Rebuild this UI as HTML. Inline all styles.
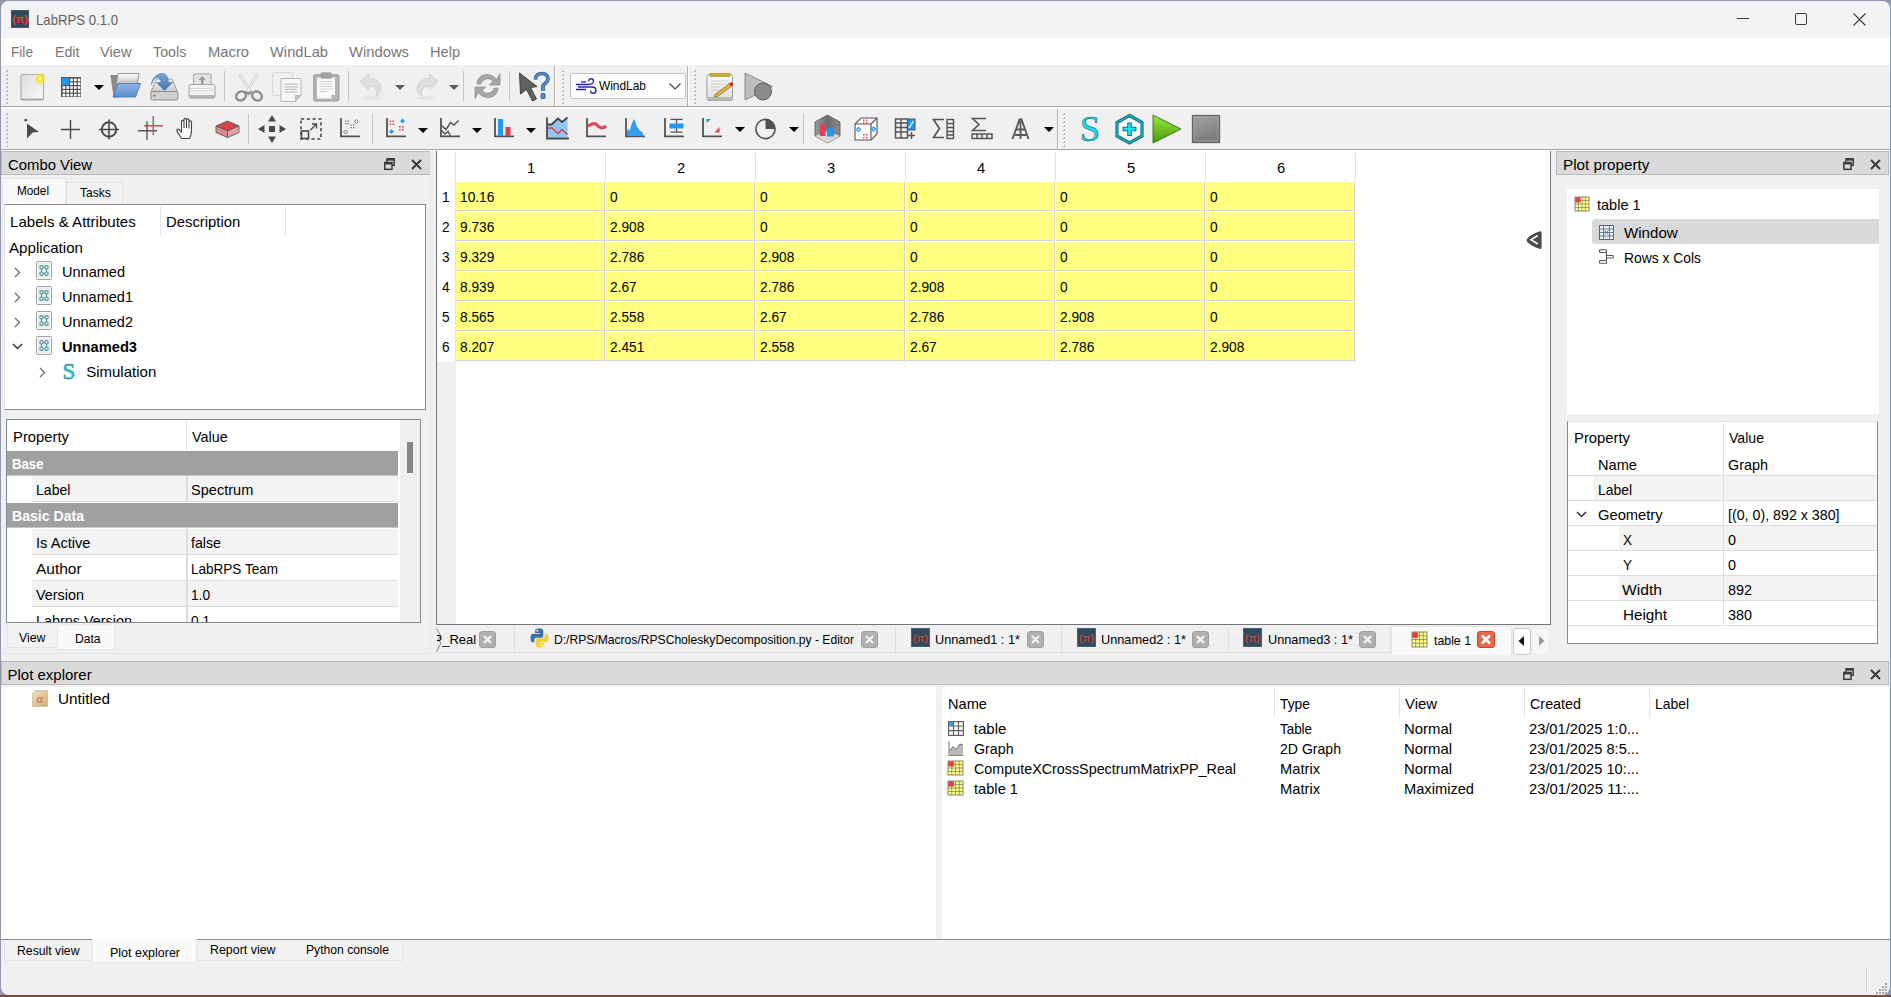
<!DOCTYPE html>
<html><head><meta charset="utf-8"><title>LabRPS</title>
<style>
*{box-sizing:border-box;margin:0;padding:0}
html,body{width:1891px;height:997px;overflow:hidden;position:relative;background:#9298ac;font-family:"Liberation Sans",sans-serif;color:#000}
.a{position:absolute}
.t{position:absolute;white-space:nowrap;transform-origin:0 0}
svg{overflow:visible}
</style></head><body>
<div class="a" style="left:0;top:995px;width:1891px;height:2px;background:#7a4c44"></div>
<div class="a" style="left:1px;top:1px;width:1889px;height:994px;background:#f0f0f0;border-radius:8px;overflow:hidden"></div>
<div class="a" style="left:1px;top:1px;width:1889px;height:37px;background:#f3f3f3;border-radius:8px 8px 0 0"></div>
<svg class="a" style="left:11px;top:10px" width="18" height="18" viewBox="0 0 18 18"><rect x="0" y="0" width="18" height="18" fill="#2e4a5f"/><rect x="0.5" y="0.5" width="17" height="17" fill="none" stroke="#3d5b70" stroke-width="1"/><text x="9" y="13" text-anchor="middle" font-family="Liberation Sans" font-weight="bold" font-size="11" fill="#e8442a">(π)</text></svg>
<div class="t" style="left:35.80px;top:12.30px;font-size:15.00px;line-height:15.00px;color:#5f5f5f;transform:scaleX(0.8780);">LabRPS 0.1.0</div>
<div class="a" style="left:1737px;top:18px;width:12px;height:1px;background:#3a3a3a"></div>
<svg class="a" style="left:1795px;top:13px" width="12" height="12" viewBox="0 0 12 12"><rect x="0.5" y="0.5" width="11" height="11" rx="1.5" fill="none" stroke="#3a3a3a" stroke-width="1"/></svg>
<svg class="a" style="left:1853px;top:13px" width="13" height="13" viewBox="0 0 13 13"><path d="M0.5 0.5L12.5 12.5M12.5 0.5L0.5 12.5" stroke="#3a3a3a" stroke-width="1.1"/></svg>
<div class="a" style="left:1px;top:38px;width:1889px;height:27px;background:#fff"></div>
<div class="t" style="left:11.40px;top:44.30px;font-size:15.00px;line-height:15.00px;color:#787878;transform:scaleX(0.9102);">File</div>
<div class="t" style="left:54.60px;top:44.30px;font-size:15.00px;line-height:15.00px;color:#787878;transform:scaleX(0.9440);">Edit</div>
<div class="t" style="left:100.30px;top:44.30px;font-size:15.00px;line-height:15.00px;color:#787878;transform:scaleX(0.9832);">View</div>
<div class="t" style="left:153.00px;top:44.30px;font-size:15.00px;line-height:15.00px;color:#787878;transform:scaleX(0.9510);">Tools</div>
<div class="t" style="left:208.30px;top:44.30px;font-size:15.00px;line-height:15.00px;color:#787878;transform:scaleX(0.9838);">Macro</div>
<div class="t" style="left:270.00px;top:44.30px;font-size:15.00px;line-height:15.00px;color:#787878;transform:scaleX(0.9797);">WindLab</div>
<div class="t" style="left:349.30px;top:44.30px;font-size:15.00px;line-height:15.00px;color:#787878;transform:scaleX(0.9860);">Windows</div>
<div class="t" style="left:430.30px;top:44.30px;font-size:15.00px;line-height:15.00px;color:#787878;transform:scaleX(0.9725);">Help</div>
<div class="a" style="left:1px;top:106px;width:1889px;height:1px;background:#a6a6a6"></div>
<div class="a" style="left:1px;top:107px;width:1889px;height:2px;background:#fdfdfd"></div>
<div class="a" style="left:1px;top:149px;width:1889px;height:1px;background:#a6a6a6"></div>
<div class="a" style="left:1px;top:150px;width:1889px;height:1px;background:#fafafa"></div>
<div class="a" style="left:554px;top:66px;width:1px;height:40px;background:#b0b0b0"></div>
<div class="a" style="left:555px;top:66px;width:1px;height:40px;background:#fff"></div>
<div class="a" style="left:687px;top:66px;width:1px;height:40px;background:#b0b0b0"></div>
<div class="a" style="left:688px;top:66px;width:1px;height:40px;background:#fff"></div>
<div class="a" style="left:1057px;top:109px;width:1px;height:40px;background:#b0b0b0"></div>
<div class="a" style="left:1058px;top:109px;width:1px;height:40px;background:#fff"></div>
<svg class="a" style="left:6px;top:70px" width="2" height="34" viewBox="0 0 2 34"><rect x="0" y="0" width="2" height="2" fill="#b4b4b4"/><rect x="0" y="0" width="1" height="1" fill="#fff"/><rect x="0" y="4" width="2" height="2" fill="#b4b4b4"/><rect x="0" y="4" width="1" height="1" fill="#fff"/><rect x="0" y="8" width="2" height="2" fill="#b4b4b4"/><rect x="0" y="8" width="1" height="1" fill="#fff"/><rect x="0" y="12" width="2" height="2" fill="#b4b4b4"/><rect x="0" y="12" width="1" height="1" fill="#fff"/><rect x="0" y="16" width="2" height="2" fill="#b4b4b4"/><rect x="0" y="16" width="1" height="1" fill="#fff"/><rect x="0" y="20" width="2" height="2" fill="#b4b4b4"/><rect x="0" y="20" width="1" height="1" fill="#fff"/><rect x="0" y="24" width="2" height="2" fill="#b4b4b4"/><rect x="0" y="24" width="1" height="1" fill="#fff"/><rect x="0" y="28" width="2" height="2" fill="#b4b4b4"/><rect x="0" y="28" width="1" height="1" fill="#fff"/><rect x="0" y="32" width="2" height="2" fill="#b4b4b4"/><rect x="0" y="32" width="1" height="1" fill="#fff"/></svg>
<svg class="a" style="left:562px;top:70px" width="2" height="34" viewBox="0 0 2 34"><rect x="0" y="0" width="2" height="2" fill="#b4b4b4"/><rect x="0" y="0" width="1" height="1" fill="#fff"/><rect x="0" y="4" width="2" height="2" fill="#b4b4b4"/><rect x="0" y="4" width="1" height="1" fill="#fff"/><rect x="0" y="8" width="2" height="2" fill="#b4b4b4"/><rect x="0" y="8" width="1" height="1" fill="#fff"/><rect x="0" y="12" width="2" height="2" fill="#b4b4b4"/><rect x="0" y="12" width="1" height="1" fill="#fff"/><rect x="0" y="16" width="2" height="2" fill="#b4b4b4"/><rect x="0" y="16" width="1" height="1" fill="#fff"/><rect x="0" y="20" width="2" height="2" fill="#b4b4b4"/><rect x="0" y="20" width="1" height="1" fill="#fff"/><rect x="0" y="24" width="2" height="2" fill="#b4b4b4"/><rect x="0" y="24" width="1" height="1" fill="#fff"/><rect x="0" y="28" width="2" height="2" fill="#b4b4b4"/><rect x="0" y="28" width="1" height="1" fill="#fff"/><rect x="0" y="32" width="2" height="2" fill="#b4b4b4"/><rect x="0" y="32" width="1" height="1" fill="#fff"/></svg>
<svg class="a" style="left:694px;top:70px" width="2" height="34" viewBox="0 0 2 34"><rect x="0" y="0" width="2" height="2" fill="#b4b4b4"/><rect x="0" y="0" width="1" height="1" fill="#fff"/><rect x="0" y="4" width="2" height="2" fill="#b4b4b4"/><rect x="0" y="4" width="1" height="1" fill="#fff"/><rect x="0" y="8" width="2" height="2" fill="#b4b4b4"/><rect x="0" y="8" width="1" height="1" fill="#fff"/><rect x="0" y="12" width="2" height="2" fill="#b4b4b4"/><rect x="0" y="12" width="1" height="1" fill="#fff"/><rect x="0" y="16" width="2" height="2" fill="#b4b4b4"/><rect x="0" y="16" width="1" height="1" fill="#fff"/><rect x="0" y="20" width="2" height="2" fill="#b4b4b4"/><rect x="0" y="20" width="1" height="1" fill="#fff"/><rect x="0" y="24" width="2" height="2" fill="#b4b4b4"/><rect x="0" y="24" width="1" height="1" fill="#fff"/><rect x="0" y="28" width="2" height="2" fill="#b4b4b4"/><rect x="0" y="28" width="1" height="1" fill="#fff"/><rect x="0" y="32" width="2" height="2" fill="#b4b4b4"/><rect x="0" y="32" width="1" height="1" fill="#fff"/></svg>
<svg class="a" style="left:6px;top:113px" width="2" height="34" viewBox="0 0 2 34"><rect x="0" y="0" width="2" height="2" fill="#b4b4b4"/><rect x="0" y="0" width="1" height="1" fill="#fff"/><rect x="0" y="4" width="2" height="2" fill="#b4b4b4"/><rect x="0" y="4" width="1" height="1" fill="#fff"/><rect x="0" y="8" width="2" height="2" fill="#b4b4b4"/><rect x="0" y="8" width="1" height="1" fill="#fff"/><rect x="0" y="12" width="2" height="2" fill="#b4b4b4"/><rect x="0" y="12" width="1" height="1" fill="#fff"/><rect x="0" y="16" width="2" height="2" fill="#b4b4b4"/><rect x="0" y="16" width="1" height="1" fill="#fff"/><rect x="0" y="20" width="2" height="2" fill="#b4b4b4"/><rect x="0" y="20" width="1" height="1" fill="#fff"/><rect x="0" y="24" width="2" height="2" fill="#b4b4b4"/><rect x="0" y="24" width="1" height="1" fill="#fff"/><rect x="0" y="28" width="2" height="2" fill="#b4b4b4"/><rect x="0" y="28" width="1" height="1" fill="#fff"/><rect x="0" y="32" width="2" height="2" fill="#b4b4b4"/><rect x="0" y="32" width="1" height="1" fill="#fff"/></svg>
<svg class="a" style="left:1063px;top:113px" width="2" height="34" viewBox="0 0 2 34"><rect x="0" y="0" width="2" height="2" fill="#b4b4b4"/><rect x="0" y="0" width="1" height="1" fill="#fff"/><rect x="0" y="4" width="2" height="2" fill="#b4b4b4"/><rect x="0" y="4" width="1" height="1" fill="#fff"/><rect x="0" y="8" width="2" height="2" fill="#b4b4b4"/><rect x="0" y="8" width="1" height="1" fill="#fff"/><rect x="0" y="12" width="2" height="2" fill="#b4b4b4"/><rect x="0" y="12" width="1" height="1" fill="#fff"/><rect x="0" y="16" width="2" height="2" fill="#b4b4b4"/><rect x="0" y="16" width="1" height="1" fill="#fff"/><rect x="0" y="20" width="2" height="2" fill="#b4b4b4"/><rect x="0" y="20" width="1" height="1" fill="#fff"/><rect x="0" y="24" width="2" height="2" fill="#b4b4b4"/><rect x="0" y="24" width="1" height="1" fill="#fff"/><rect x="0" y="28" width="2" height="2" fill="#b4b4b4"/><rect x="0" y="28" width="1" height="1" fill="#fff"/><rect x="0" y="32" width="2" height="2" fill="#b4b4b4"/><rect x="0" y="32" width="1" height="1" fill="#fff"/></svg>
<div class="a" style="left:224px;top:71px;width:1px;height:30px;background:#c6c6c6"></div>
<div class="a" style="left:348px;top:71px;width:1px;height:30px;background:#c6c6c6"></div>
<div class="a" style="left:463px;top:71px;width:1px;height:30px;background:#c6c6c6"></div>
<div class="a" style="left:509px;top:71px;width:1px;height:30px;background:#c6c6c6"></div>
<div class="a" style="left:248px;top:114px;width:1px;height:30px;background:#c6c6c6"></div>
<div class="a" style="left:372px;top:114px;width:1px;height:30px;background:#c6c6c6"></div>
<div class="a" style="left:803px;top:114px;width:1px;height:30px;background:#c6c6c6"></div>
<svg class="a" style="left:20px;top:73px" width="27" height="28" viewBox="0 0 27 28"><defs><linearGradient id="nd" x1="0" y1="0" x2="1" y2="1"><stop offset="0" stop-color="#dcdcdc"/><stop offset="1" stop-color="#fafafa"/></linearGradient><radialGradient id="glow"><stop offset="0" stop-color="#fffff0"/><stop offset="0.35" stop-color="#f5ea20"/><stop offset="1" stop-color="#f5ea20" stop-opacity="0"/></radialGradient></defs><rect x="1" y="1.5" width="22.5" height="25.5" rx="1.5" fill="url(#nd)" stroke="#adadad" stroke-width="1.2"/><rect x="1" y="25.5" width="22.5" height="1.6" fill="#a8a8a8"/><circle cx="20" cy="6" r="6.5" fill="url(#glow)"/></svg>
<svg class="a" style="left:61px;top:77px" width="20" height="20" viewBox="0 0 20 20"><rect x="0" y="0" width="20" height="20" fill="#555"/><rect x="9.2" y="1.6" width="2.6" height="2.6" fill="#fff"/><rect x="13.0" y="1.6" width="2.6" height="2.6" fill="#fff"/><rect x="16.8" y="1.6" width="2.6" height="2.6" fill="#fff"/><rect x="9.2" y="5.4" width="2.6" height="2.6" fill="#fff"/><rect x="13.0" y="5.4" width="2.6" height="2.6" fill="#fff"/><rect x="16.8" y="5.4" width="2.6" height="2.6" fill="#fff"/><rect x="1.6" y="9.2" width="2.6" height="2.6" fill="#fff"/><rect x="5.4" y="9.2" width="2.6" height="2.6" fill="#fff"/><rect x="9.2" y="9.2" width="2.6" height="2.6" fill="#fff"/><rect x="13.0" y="9.2" width="2.6" height="2.6" fill="#fff"/><rect x="16.8" y="9.2" width="2.6" height="2.6" fill="#fff"/><rect x="1.6" y="13.0" width="2.6" height="2.6" fill="#fff"/><rect x="5.4" y="13.0" width="2.6" height="2.6" fill="#fff"/><rect x="9.2" y="13.0" width="2.6" height="2.6" fill="#fff"/><rect x="13.0" y="13.0" width="2.6" height="2.6" fill="#fff"/><rect x="16.8" y="13.0" width="2.6" height="2.6" fill="#fff"/><rect x="1.6" y="16.8" width="2.6" height="2.6" fill="#fff"/><rect x="5.4" y="16.8" width="2.6" height="2.6" fill="#fff"/><rect x="9.2" y="16.8" width="2.6" height="2.6" fill="#fff"/><rect x="13.0" y="16.8" width="2.6" height="2.6" fill="#fff"/><rect x="16.8" y="16.8" width="2.6" height="2.6" fill="#fff"/><rect x="1" y="1" width="7" height="7" fill="#2196f3"/></svg>
<svg class="a" style="left:94px;top:85px" width="10" height="5" viewBox="0 0 10 5"><path d="M0 0H10L5 5Z" fill="#000"/></svg>
<svg class="a" style="left:110px;top:72px" width="31" height="27" viewBox="0 0 31 27"><defs><linearGradient id="of" x1="0" y1="0" x2="0" y2="1"><stop offset="0" stop-color="#8fb4e0"/><stop offset="1" stop-color="#5a8fd0"/></linearGradient><linearGradient id="pp" x1="0" y1="0" x2="0" y2="1"><stop offset="0" stop-color="#fff"/><stop offset="1" stop-color="#b8b8b8"/></linearGradient></defs><path d="M1 3.5H8V25H4Z" fill="#8a8a8a" stroke="#777" stroke-width="0.8"/><path d="M8 1.5H29L27 13H6Z" fill="url(#pp)" stroke="#8c8c8c" stroke-width="0.9"/><path d="M8 11.5H30.5L25.5 25H3Z" fill="url(#of)" stroke="#4a7cc0" stroke-width="0.9"/></svg>
<svg class="a" style="left:150px;top:72px" width="29" height="29" viewBox="0 0 29 29"><defs><linearGradient id="dr" x1="0" y1="0" x2="0" y2="1"><stop offset="0" stop-color="#f4f4f4"/><stop offset="1" stop-color="#c8c8c8"/></linearGradient></defs><path d="M6.5 7H22L27.5 20H1Z" fill="url(#dr)" stroke="#9a9a9a" stroke-width="1"/><rect x="0.8" y="19.5" width="27" height="8.5" rx="1.5" fill="#d0d0d0" stroke="#8e8e8e" stroke-width="1"/><rect x="3" y="23" width="3" height="1.5" fill="#888"/><defs><linearGradient id="sa" x1="0" y1="0" x2="0" y2="1"><stop offset="0" stop-color="#7aa4d8"/><stop offset="1" stop-color="#3f72b8"/></linearGradient></defs><path d="M1.5 12.5C2 6 7 1.5 12 1.5C15.5 1.5 18 4 18.5 10.5H22.5L14.5 18.5L6.5 10.5H11C11 7.5 9.5 5.5 7 5.5C4.5 5.5 2.5 8.5 1.5 12.5Z" fill="url(#sa)" stroke="#3a6aa8" stroke-width="0.5"/></svg>
<svg class="a" style="left:188px;top:73px" width="29" height="28" viewBox="0 0 29 28"><rect x="5.5" y="1" width="17.5" height="13" rx="1" fill="#e4e4e4" stroke="#a8a8a8" stroke-width="1"/><path d="M14.2 3L18 7H15.5V11H13V7H10.5Z" fill="#9c9c9c"/><rect x="1" y="11.5" width="26" height="13.5" rx="2" fill="#f2f2f2" stroke="#a0a0a0" stroke-width="1"/><rect x="1" y="22" width="26" height="3.5" rx="1.5" fill="#b4b4b4"/><rect x="3.5" y="15.5" width="21" height="2" fill="#fff" stroke="#c4c4c4" stroke-width="0.6"/></svg>
<svg class="a" style="left:235px;top:72px" width="29" height="31" viewBox="0 0 29 31"><path d="M4.5 1.5L15 20M22.5 1.5L12 20" stroke="#c8c8c8" stroke-width="2.6" fill="none"/><path d="M4.5 1.5L15 20M22.5 1.5L12 20" stroke="#f4f4f4" stroke-width="1.2" fill="none"/><ellipse cx="6" cy="24" rx="5" ry="4.3" fill="none" stroke="#8d8d8d" stroke-width="2.4" transform="rotate(-35 6 24)"/><ellipse cx="22" cy="24" rx="5" ry="4.3" fill="none" stroke="#8d8d8d" stroke-width="2.4" transform="rotate(35 22 24)"/><path d="M10 19.5L13.5 22L17 19.5" stroke="#8d8d8d" stroke-width="2.2" fill="none"/></svg>
<svg class="a" style="left:272px;top:72px" width="30" height="31" viewBox="0 0 30 31"><rect x="0.7" y="0.7" width="20" height="23" rx="1.5" fill="#f0f0f0" stroke="#d4d4d4" stroke-width="1"/><path d="M9 6.5H29V23.5L23.5 29.5H9Z" fill="#f6f6f6" stroke="#b8b8b8" stroke-width="1"/><path d="M23.5 29.5V23.5H29" fill="#c4c4c4" stroke="#b0b0b0" stroke-width="0.8"/><path d="M12.5 12.2H26M12.5 14.8H26M12.5 17.4H25M12.5 20H26" stroke="#c0c0c0" stroke-width="1.2"/></svg>
<svg class="a" style="left:313px;top:72px" width="27" height="30" viewBox="0 0 27 30"><rect x="0.8" y="2.8" width="25" height="26" rx="1.5" fill="#b4b4b4" stroke="#9c9c9c" stroke-width="1.2"/><path d="M4 5.5H22V23L18.5 26.5H4Z" fill="#fafafa"/><path d="M18.5 26.5V23H22Z" fill="#aaa"/><rect x="8" y="0.8" width="10.5" height="5.5" rx="1" fill="#a4a4a4" stroke="#909090" stroke-width="0.6"/><path d="M6.5 9.5H20M6.5 12H19.5M6.5 14.5H19M6.5 17H20M6.5 19.5H14" stroke="#d2d2d2" stroke-width="1.1"/></svg>
<svg class="a" style="left:359px;top:73px" width="24" height="27" viewBox="0 0 24 27"><path d="M1 8.5L9.5 1V5.5C17 5 22 9 22 15.5C22 19.5 19.5 22 17 23C19 18 17 13 9.5 13V17Z" fill="#dedede" stroke="#cfcfcf" stroke-width="0.8"/><ellipse cx="13" cy="25" rx="9" ry="1.8" fill="#e4e4e4"/></svg>
<svg class="a" style="left:395px;top:85px" width="10" height="5" viewBox="0 0 10 5"><path d="M0 0H10L5 5Z" fill="#5e5e5e"/></svg>
<svg class="a" style="left:415px;top:73px" width="24" height="27" viewBox="0 0 24 27"><path d="M23 8.5L14.5 1V5.5C7 5 2 9 2 15.5C2 19.5 4.5 22 7 23C5 18 7 13 14.5 13V17Z" fill="#dedede" stroke="#cfcfcf" stroke-width="0.8"/><ellipse cx="11" cy="25" rx="9" ry="1.8" fill="#e4e4e4"/></svg>
<svg class="a" style="left:449px;top:85px" width="10" height="5" viewBox="0 0 10 5"><path d="M0 0H10L5 5Z" fill="#5e5e5e"/></svg>
<svg class="a" style="left:474px;top:72px" width="27" height="29" viewBox="0 0 27 29"><path d="M3 12C3 5 9 2 14 2.5C18 3 21 5 22.5 7.5L26 1.5V13H15L19 9.5C17.5 7.5 15.5 6.5 13 6.8C9.5 7.2 7.5 9.5 7 12Z" fill="#a6a6a6" stroke="#8e8e8e" stroke-width="0.7"/><path d="M24 16C24 23 18 26 13 25.5C9 25 6 23 4.5 20.5L1 26.5V15H12L8 18.5C9.5 20.5 11.5 21.5 14 21.2C17.5 20.8 19.5 18.5 20 16Z" fill="#a6a6a6" stroke="#8e8e8e" stroke-width="0.7"/></svg>
<svg class="a" style="left:518px;top:72px" width="32" height="31" viewBox="0 0 32 31"><path d="M1.5 1L19 14.5L12.5 15.5L18.5 27L14.5 29L8.5 17.5L2.5 22Z" fill="#5d625c" stroke="#3e423d" stroke-width="1"/><path d="M17.5 7.5C17.5 3.5 20.5 1.5 24 1.5C27.5 1.5 30 4 30 7C30 10.5 26 11.5 25 14V19" fill="none" stroke="#2a4f80" stroke-width="3.6"/><path d="M17.5 7.5C17.5 3.5 20.5 1.5 24 1.5C27.5 1.5 30 4 30 7C30 10.5 26 11.5 25 14V19" fill="none" stroke="#5090d8" stroke-width="2"/><rect x="23" y="21.5" width="4" height="5" rx="1" fill="#5090d8" stroke="#2a4f80" stroke-width="0.9"/></svg>
<div class="a" style="left:570px;top:73px;width:116px;height:26px;background:#fdfdfd;border:1px solid #c2c2c2;border-radius:2px"></div>
<svg class="a" style="left:575px;top:78px" width="22" height="16" viewBox="0 0 22 16"><path d="M1 6.5H14C17 6.5 18.5 4.5 18.5 3C18.5 1.5 17.3 0.8 16 0.8C14.5 0.8 13.5 2 13.8 3.3M3 9H17C19.5 9 21 10.5 21 12.5C21 14.5 19.5 15.3 18 15.3C16.5 15.3 15.3 14 15.8 12.5M1 11.5H11" fill="none" stroke="#2a2a9c" stroke-width="1.4"/><path d="M6 4H11" stroke="#2a2a9c" stroke-width="1.4"/></svg>
<div class="t" style="left:599.00px;top:80.17px;font-size:12.20px;line-height:12.20px;transform:scaleX(0.9758);">WindLab</div>
<svg class="a" style="left:669px;top:83px" width="12" height="7" viewBox="0 0 12 7"><path d="M0.5 0.5L6 6L11.5 0.5" fill="none" stroke="#444" stroke-width="1.1"/></svg>
<svg class="a" style="left:706px;top:72px" width="28" height="29" viewBox="0 0 28 29"><defs><linearGradient id="np" x1="0" y1="0" x2="0" y2="1"><stop offset="0" stop-color="#fff"/><stop offset="1" stop-color="#dcdcdc"/></linearGradient></defs><rect x="1" y="2.5" width="25.5" height="26" rx="2" fill="url(#np)" stroke="#9a9a9a" stroke-width="1"/><rect x="1" y="25" width="25.5" height="3.5" rx="1.5" fill="#b8b8b8"/><rect x="3.5" y="1" width="21" height="4" fill="#c7a83a"/><path d="M5 9H22M5 12H20M5 15H14M5 18H13" stroke="#c8c8c8" stroke-width="0.9"/><path d="M9 22.5L24 11L26.5 13.5L11.5 24.5L8.5 25Z" fill="#e8b040" stroke="#8a6020" stroke-width="0.7"/><circle cx="25.3" cy="12" r="1.8" fill="#d02020"/></svg>
<svg class="a" style="left:744px;top:72px" width="30" height="30" viewBox="0 0 30 30"><path d="M1 1L28.5 14.5L1 28Z" fill="#bdbdbd" stroke="#8a8a8a" stroke-width="1"/><circle cx="19" cy="19.5" r="8.5" fill="#8c8c8c" stroke="#5e5e5e" stroke-width="1"/></svg>
<svg class="a" style="left:24px;top:118px" width="17" height="22" viewBox="0 0 17 22"><circle cx="1.8" cy="2.2" r="1.4" fill="#4a4a4a"/><path d="M3 5.5L15 14L8.5 14.5L3 20.5Z" fill="#4a4a4a"/></svg>
<svg class="a" style="left:60px;top:119px" width="21" height="21" viewBox="0 0 21 21"><path d="M1 10.5H20M10.5 1V20" stroke="#4a4a4a" stroke-width="1.4"/></svg>
<svg class="a" style="left:98px;top:118px" width="22" height="23" viewBox="0 0 22 23"><circle cx="11" cy="11.5" r="7.2" fill="none" stroke="#4a4a4a" stroke-width="2"/><path d="M1 11.5H21M11 1.5V21.5" stroke="#4a4a4a" stroke-width="1.6"/></svg>
<svg class="a" style="left:136px;top:115px" width="28" height="26" viewBox="0 0 28 26"><path d="M2 15.7H21M11 6.5V25" stroke="#555" stroke-width="1.4"/><path d="M8 10.8H27M17.3 1V20" stroke="#e04050" stroke-width="1.4"/></svg>
<svg class="a" style="left:176px;top:117px" width="23" height="23" viewBox="0 0 23 23"><path d="M5.5 21.5C4 19 1.5 15.5 0.8 13.5C0.5 12.2 2 11.5 3 12.5L5.5 15V4.5C5.5 3 8 3 8 4.5V11V2.5C8 1 10.5 1 10.5 2.5V11V3C10.5 1.5 13 1.5 13 3V11.5V5C13 3.5 15.5 3.5 15.5 5V14.5C15.5 17.5 14.5 19.5 13.5 21.5Z" fill="#fbfbfb" stroke="#454545" stroke-width="1.1"/></svg>
<svg class="a" style="left:215px;top:120px" width="25" height="19" viewBox="0 0 25 19"><path d="M1 6L12.5 1L24 6L12.5 11Z" fill="#d9414a" stroke="#5a5a5a" stroke-width="0.9"/><path d="M1 6V12.5L12.5 17.5V11Z" fill="#e08a8e" stroke="#5a5a5a" stroke-width="0.9"/><path d="M24 6V12.5L12.5 17.5V11Z" fill="#e9a0a3" stroke="#5a5a5a" stroke-width="0.9"/></svg>
<svg class="a" style="left:257px;top:114px" width="30" height="30" viewBox="0 0 30 30"><path d="M15 1L19 7.5H11Z M15 29L19 22.5H11Z M1 15L7.5 11V19Z M29 15L22.5 11V19Z" fill="#4a4a4a"/><rect x="12" y="12" width="6" height="6" fill="#4a4a4a"/></svg>
<svg class="a" style="left:300px;top:118px" width="22" height="22" viewBox="0 0 22 22"><rect x="1" y="1" width="20" height="20" fill="none" stroke="#4a4a4a" stroke-width="1.6" stroke-dasharray="3.2 2.6"/><rect x="1.5" y="13" width="7" height="7.5" fill="#f0f0f0" stroke="#4a4a4a" stroke-width="1.6"/><path d="M10.5 12L16.5 6M12 6H16.5V10.5" fill="none" stroke="#4a4a4a" stroke-width="1.4"/></svg>
<svg class="a" style="left:339px;top:117px" width="22" height="22" viewBox="0 0 22 22"><path d="M2 1V20M1 19.3H21" stroke="#555" stroke-width="1.8"/><path d="M6 3.5h1.3v1.3H6zM8.5 3.5h1.3v1.3H8.5zM6 6h1.3v1.3H6zM8.5 6h1.3v1.3H8.5zM11.5 7.5h1.3v1.3h-1.3zM14 7.5h1.3v1.3H14zM11.5 10h1.3v1.3h-1.3zM14 10h1.3v1.3H14z" fill="#666"/><path d="M17.5 2.5L19.5 4.5L17.5 6.5L15.5 4.5Z M6.5 13L8.5 15L6.5 17L4.5 15Z" fill="none" stroke="#666" stroke-width="0.9"/></svg>
<svg class="a" style="left:385px;top:117px" width="22" height="22" viewBox="0 0 22 22"><path d="M2 1V20M1 19.3H21" stroke="#555" stroke-width="1.8"/><path d="M4.5 3.5h1.6v1.6H4.5zM7.5 3.5h1.6v1.6H7.5zM4.5 6.5h1.6v1.6H4.5zM7.5 6.5h1.6v1.6H7.5zM14 9h1.6v1.6H14zM17 9h1.6v1.6H17zM14 12h1.6v1.6H14zM17 12h1.6v1.6H17z" fill="#e04050"/><path d="M17.5 1.5L20 4L17.5 6.5L15 4Z M6.5 12L9 14.5L6.5 17L4 14.5Z" fill="#2aa0f0"/></svg>
<svg class="a" style="left:418px;top:128px" width="10" height="5" viewBox="0 0 10 5"><path d="M0 0H10L5 5Z" fill="#000"/></svg>
<svg class="a" style="left:439px;top:117px" width="22" height="22" viewBox="0 0 22 22"><path d="M2 1V20M1 19.3H21" stroke="#555" stroke-width="1.8"/><path d="M2 8L7 12.5L11.5 5.5L15 8L19.5 3.5M2 13L6 17L9 14.5L11.5 19" fill="none" stroke="#555" stroke-width="1.5"/></svg>
<svg class="a" style="left:472px;top:128px" width="10" height="5" viewBox="0 0 10 5"><path d="M0 0H10L5 5Z" fill="#000"/></svg>
<svg class="a" style="left:493px;top:117px" width="22" height="22" viewBox="0 0 22 22"><path d="M2 1V20M1 19.3H21" stroke="#555" stroke-width="1.8"/><rect x="5" y="2" width="5" height="17" fill="#2196f3"/><rect x="12.5" y="10" width="5" height="9" fill="#e04050"/></svg>
<svg class="a" style="left:526px;top:128px" width="10" height="5" viewBox="0 0 10 5"><path d="M0 0H10L5 5Z" fill="#000"/></svg>
<svg class="a" style="left:545px;top:116px" width="25" height="25" viewBox="0 0 25 25"><path d="M2.5 8.5H6.5L13 3L17 6.5L22.5 2V21.5H2.5Z" fill="#8ec8f0"/><path d="M2 1.5V22.5H23V21.5M2.5 8.5H6.5L13 2.5L17 6L22.5 1.5" fill="none" stroke="#484848" stroke-width="1.8"/><path d="M2.5 12H7L13 17.5L17 13.5L22.5 18.5" fill="none" stroke="#e04050" stroke-width="1.6"/></svg>
<svg class="a" style="left:585px;top:117px" width="23" height="22" viewBox="0 0 23 22"><path d="M2 1V20M1 19.3H21" stroke="#555" stroke-width="1.8"/><path d="M3 9C6 7.5 9 4.5 12 8C15 11.5 18 12 21 9" fill="none" stroke="#dc4a5a" stroke-width="3.2"/></svg>
<svg class="a" style="left:624px;top:117px" width="22" height="22" viewBox="0 0 22 22"><path d="M2 1V20M1 19.3H21" stroke="#555" stroke-width="1.8"/><path d="M3 19V14L4.5 12L6 14L7 9L8.5 5L10 2L11.5 5L12.5 9L14 11L15.5 13.5L17.5 14.5L19 16.5V19Z" fill="#2196f3"/><path d="M5 19V13M7 19V10M9 19V5M11 19V4M13 19V9M15 19V12M17 19V14" stroke="#70b8f0" stroke-width="0.4"/></svg>
<svg class="a" style="left:663px;top:117px" width="22" height="22" viewBox="0 0 22 22"><path d="M2 1V20M1 19.3H21" stroke="#555" stroke-width="1.8"/><path d="M7.5 2.3H19.5M7.5 15.2H19.5M13.5 2.3V15.2" stroke="#555" stroke-width="1.3"/><rect x="6.5" y="6.5" width="14" height="5" fill="#2196f3"/></svg>
<svg class="a" style="left:701px;top:117px" width="22" height="22" viewBox="0 0 22 22"><path d="M2 1V20M1 19.3H21" stroke="#555" stroke-width="1.8"/><path d="M5.5 2H10L5.5 6Z" fill="#2196f3"/><path d="M18.5 10V15.5H13.5Z" fill="#e04050"/></svg>
<svg class="a" style="left:735px;top:127px" width="10" height="5" viewBox="0 0 10 5"><path d="M0 0H10L5 5Z" fill="#000"/></svg>
<svg class="a" style="left:754px;top:118px" width="23" height="22" viewBox="0 0 23 22"><circle cx="11.5" cy="11" r="9.6" fill="none" stroke="#505050" stroke-width="1.6"/><path d="M11.5 11V1.4A9.6 9.6 0 0 1 21.1 11Z" fill="#505050"/></svg>
<svg class="a" style="left:789px;top:127px" width="10" height="5" viewBox="0 0 10 5"><path d="M0 0H10L5 5Z" fill="#000"/></svg>
<svg class="a" style="left:814px;top:114px" width="27" height="30" viewBox="0 0 27 30"><defs><linearGradient id="hx" x1="0" y1="0" x2="1" y2="0"><stop offset="0" stop-color="#9a9a9a"/><stop offset="0.5" stop-color="#6e6e6e"/><stop offset="1" stop-color="#8a8a8a"/></linearGradient></defs><path d="M13.5 1L26 8V22L13.5 29L1 22V8Z" fill="url(#hx)" stroke="#555" stroke-width="0.8"/><path d="M13.5 17L26 22L13.5 29L1 22Z" fill="#d8d8d8"/><rect x="6" y="10.5" width="5.5" height="11.5" fill="#e04050"/><rect x="13" y="14" width="7" height="8.5" fill="#2196f3"/></svg>
<svg class="a" style="left:854px;top:117px" width="24" height="24" viewBox="0 0 24 24"><path d="M1 7L7 1H23V17L17 23H1Z" fill="#fafafa" stroke="#555" stroke-width="1.1"/><path d="M1 7H17V23M17 7L23 1" fill="none" stroke="#555" stroke-width="1.1"/><path d="M9 2.5h1.5v1.5H9zM12 2.5h1.5v1.5H12zM9 5h1.5v1.5H9zM12 5h1.5v1.5H12zM9 17h1.5v1.5H9zM12 17h1.5v1.5H12zM9 20h1.5v1.5H9zM12 20h1.5v1.5H12z" fill="#e04050"/><path d="M4.5 10.5L6.5 12.5L4.5 14.5L2.5 12.5ZM19.5 10L21.5 12L19.5 14L17.5 12Z" fill="none" stroke="#2196f3" stroke-width="1.2"/></svg>
<svg class="a" style="left:894px;top:118px" width="22" height="22" viewBox="0 0 22 22"><path d="M1.5 1H13.5V20H1.5ZM1.5 5H13.5M1.5 9.5H13.5M1.5 14H13.5M7 1V20" fill="none" stroke="#555" stroke-width="1.5"/><rect x="13.5" y="1" width="7.5" height="11" fill="#2196f3" stroke="#555" stroke-width="1"/><path d="M15 10L19.5 3" stroke="#fff" stroke-width="1.3"/><path d="M17.5 14V21M14 17.5H21" stroke="#555" stroke-width="1.5"/></svg>
<svg class="a" style="left:932px;top:118px" width="23" height="22" viewBox="0 0 23 22"><path d="M12 1.5H1.5L7.5 10.5L1.5 19.5H12" fill="none" stroke="#555" stroke-width="1.7"/><path d="M15 1.5H21.5V20.5H15ZM15 5.5H21.5M15 9.5H21.5M15 13.5H21.5M15 17H21.5" fill="none" stroke="#555" stroke-width="1.4"/></svg>
<svg class="a" style="left:971px;top:117px" width="23" height="23" viewBox="0 0 23 23"><path d="M15 1.5H1.5L8 7.5L1.5 13.5H15" fill="none" stroke="#555" stroke-width="1.6"/><path d="M1 17H21V21.5H1ZM6 17V21.5M11 17V21.5M16 17V21.5" fill="none" stroke="#555" stroke-width="1.5"/></svg>
<svg class="a" style="left:1011px;top:118px" width="19" height="22" viewBox="0 0 19 22"><path d="M1.5 21L8.5 1.5H10.5L17.5 21M5 11.5H14M9.5 3V21M4 17H15" fill="none" stroke="#555" stroke-width="1.8"/></svg>
<svg class="a" style="left:1044px;top:127px" width="10" height="5" viewBox="0 0 10 5"><path d="M0 0H10L5 5Z" fill="#000"/></svg>
<svg class="a" style="left:1080px;top:115px" width="20" height="28" viewBox="0 0 20 28"><text x="10" y="26" text-anchor="middle" font-family="Liberation Serif" font-size="36" fill="#10e0e8" stroke="#1b6570" stroke-width="0.6">S</text></svg>
<svg class="a" style="left:1115px;top:114px" width="29" height="30" viewBox="0 0 29 30"><path d="M14.5 1.5L27 8.5V22L14.5 29L2 22V8.5Z" fill="#fff" stroke="#176d78" stroke-width="3.2"/><path d="M14.5 1.5L27 8.5V22L14.5 29L2 22V8.5Z" fill="none" stroke="#18d0e0" stroke-width="1"/><path d="M14.5 8.5V22M7.5 15H21.5" stroke="#176d78" stroke-width="4.6"/><path d="M14.5 9.5V21M8.5 15H20.5" stroke="#10e8f0" stroke-width="2.6"/></svg>
<svg class="a" style="left:1152px;top:114px" width="30" height="30" viewBox="0 0 30 30"><defs><linearGradient id="pl" x1="0" y1="0" x2="0" y2="1"><stop offset="0" stop-color="#96e840"/><stop offset="1" stop-color="#4a9a0a"/></linearGradient></defs><path d="M1 1L29 15L1 29Z" fill="url(#pl)" stroke="#2a5a08" stroke-width="0.8"/></svg>
<svg class="a" style="left:1191px;top:114px" width="30" height="30" viewBox="0 0 30 30"><defs><linearGradient id="st" x1="0" y1="0" x2="0.3" y2="1"><stop offset="0" stop-color="#a4a4a4"/><stop offset="1" stop-color="#7c7c7c"/></linearGradient></defs><rect x="1.5" y="1.5" width="27" height="27" fill="url(#st)" stroke="#646464" stroke-width="1.3"/><rect x="3" y="3" width="24" height="24" fill="none" stroke="#aaa" stroke-width="0.6"/></svg>
<div class="a" style="left:1px;top:151px;width:430px;height:24px;background:#dadada;border:1px solid #bababa"></div>
<div class="t" style="left:7.50px;top:157.30px;font-size:15.00px;line-height:15.00px;transform:scaleX(0.9910);">Combo View</div>
<svg class="a" style="left:384px;top:158px" width="11" height="12" viewBox="0 0 11 12"><rect x="3" y="0.8" width="7.2" height="6.5" fill="none" stroke="#3c3c3c" stroke-width="1.5"/><rect x="3" y="0.8" width="7.2" height="1.8" fill="#3c3c3c"/><rect x="0.8" y="4.5" width="7.2" height="6.8" fill="#dadada" stroke="#3c3c3c" stroke-width="1.5"/><rect x="0.8" y="4.5" width="7.2" height="2" fill="#3c3c3c"/></svg>
<svg class="a" style="left:411px;top:159px" width="11" height="11" viewBox="0 0 11 11"><path d="M1 1L10 10M10 1L1 10" stroke="#3a3a3a" stroke-width="2"/></svg>
<div class="a" style="left:2px;top:178px;width:64px;height:27px;background:#f9f9f9;border:1px solid #e4e4e4;border-bottom:none;border-radius:2px 2px 0 0"></div>
<div class="a" style="left:66px;top:182px;width:57px;height:22px;background:#f2f2f2;border:1px solid #e2e2e2;border-bottom:none"></div>
<div class="t" style="left:16.80px;top:183.90px;font-size:13.00px;line-height:13.00px;transform:scaleX(0.9038);">Model</div>
<div class="t" style="left:80.00px;top:185.50px;font-size:13.00px;line-height:13.00px;transform:scaleX(0.9239);">Tasks</div>
<div class="a" style="left:4px;top:204px;width:422px;height:206px;background:#fff;border:1px solid #828a93;border-left-color:#e6e6e6"></div>
<div class="a" style="left:160px;top:206px;width:1px;height:30px;background:#e5e5e5"></div>
<div class="a" style="left:285px;top:206px;width:1px;height:30px;background:#e5e5e5"></div>
<div class="t" style="left:10.30px;top:213.90px;font-size:15.00px;line-height:15.00px;transform:scaleX(1.0058);">Labels &amp; Attributes</div>
<div class="t" style="left:166.40px;top:213.90px;font-size:15.00px;line-height:15.00px;transform:scaleX(0.9889);">Description</div>
<div class="t" style="left:9.00px;top:240.10px;font-size:15.00px;line-height:15.00px;transform:scaleX(1.0084);">Application</div>
<svg class="a" style="left:14px;top:266.5px" width="7" height="11" viewBox="0 0 7 11"><path d="M1 1L5.5 5.5L1 10" fill="none" stroke="#6a6a6a" stroke-width="1.3"/></svg>
<svg class="a" style="left:36px;top:260.5px" width="16" height="19" viewBox="0 0 16 19"><rect x="0.5" y="0.5" width="15" height="18" rx="1" fill="#ececec" stroke="#a2a2a2" stroke-width="1"/><rect x="1.5" y="1.5" width="13" height="16" fill="none" stroke="#fafafa" stroke-width="0.8"/><g fill="none" stroke="#4e9a9a" stroke-width="1.1"><circle cx="5.5" cy="6.3" r="1.7"/><circle cx="10.5" cy="6.3" r="1.7"/><circle cx="5.5" cy="12.7" r="1.7"/><circle cx="10.5" cy="12.7" r="1.7"/><path d="M7.2 6.3H8.8M7.2 12.7H8.8M5.5 8V11M10.5 8V11"/></g></svg>
<div class="t" style="left:61.70px;top:263.80px;font-size:15.00px;line-height:15.00px;transform:scaleX(0.9686);">Unnamed</div>
<svg class="a" style="left:14px;top:291.5px" width="7" height="11" viewBox="0 0 7 11"><path d="M1 1L5.5 5.5L1 10" fill="none" stroke="#6a6a6a" stroke-width="1.3"/></svg>
<svg class="a" style="left:36px;top:285.5px" width="16" height="19" viewBox="0 0 16 19"><rect x="0.5" y="0.5" width="15" height="18" rx="1" fill="#ececec" stroke="#a2a2a2" stroke-width="1"/><rect x="1.5" y="1.5" width="13" height="16" fill="none" stroke="#fafafa" stroke-width="0.8"/><g fill="none" stroke="#4e9a9a" stroke-width="1.1"><circle cx="5.5" cy="6.3" r="1.7"/><circle cx="10.5" cy="6.3" r="1.7"/><circle cx="5.5" cy="12.7" r="1.7"/><circle cx="10.5" cy="12.7" r="1.7"/><path d="M7.2 6.3H8.8M7.2 12.7H8.8M5.5 8V11M10.5 8V11"/></g></svg>
<div class="t" style="left:61.70px;top:288.80px;font-size:15.00px;line-height:15.00px;transform:scaleX(0.9675);">Unnamed1</div>
<svg class="a" style="left:14px;top:316.5px" width="7" height="11" viewBox="0 0 7 11"><path d="M1 1L5.5 5.5L1 10" fill="none" stroke="#6a6a6a" stroke-width="1.3"/></svg>
<svg class="a" style="left:36px;top:310.5px" width="16" height="19" viewBox="0 0 16 19"><rect x="0.5" y="0.5" width="15" height="18" rx="1" fill="#ececec" stroke="#a2a2a2" stroke-width="1"/><rect x="1.5" y="1.5" width="13" height="16" fill="none" stroke="#fafafa" stroke-width="0.8"/><g fill="none" stroke="#4e9a9a" stroke-width="1.1"><circle cx="5.5" cy="6.3" r="1.7"/><circle cx="10.5" cy="6.3" r="1.7"/><circle cx="5.5" cy="12.7" r="1.7"/><circle cx="10.5" cy="12.7" r="1.7"/><path d="M7.2 6.3H8.8M7.2 12.7H8.8M5.5 8V11M10.5 8V11"/></g></svg>
<div class="t" style="left:61.70px;top:313.80px;font-size:15.00px;line-height:15.00px;transform:scaleX(0.9675);">Unnamed2</div>
<svg class="a" style="left:12px;top:342.5px" width="11" height="7" viewBox="0 0 11 7"><path d="M1 1L5.5 5.5L10 1" fill="none" stroke="#333" stroke-width="1.5"/></svg>
<svg class="a" style="left:36px;top:335.5px" width="16" height="19" viewBox="0 0 16 19"><rect x="0.5" y="0.5" width="15" height="18" rx="1" fill="#ececec" stroke="#a2a2a2" stroke-width="1"/><rect x="1.5" y="1.5" width="13" height="16" fill="none" stroke="#fafafa" stroke-width="0.8"/><g fill="none" stroke="#4e9a9a" stroke-width="1.1"><circle cx="5.5" cy="6.3" r="1.7"/><circle cx="10.5" cy="6.3" r="1.7"/><circle cx="5.5" cy="12.7" r="1.7"/><circle cx="10.5" cy="12.7" r="1.7"/><path d="M7.2 6.3H8.8M7.2 12.7H8.8M5.5 8V11M10.5 8V11"/></g></svg>
<div class="t" style="left:61.70px;top:338.80px;font-size:15.00px;line-height:15.00px;font-weight:bold;transform:scaleX(0.9780);">Unnamed3</div>
<svg class="a" style="left:39px;top:366.5px" width="7" height="11" viewBox="0 0 7 11"><path d="M1 1L5.5 5.5L1 10" fill="none" stroke="#6a6a6a" stroke-width="1.3"/></svg>
<svg class="a" style="left:62px;top:361.5px" width="14" height="18" viewBox="0 0 14 18"><text x="7" y="16.5" text-anchor="middle" font-family="Liberation Serif" font-size="23" fill="#14d2dc" stroke="#1e6a72" stroke-width="0.45">S</text></svg>
<div class="t" style="left:86.20px;top:363.80px;font-size:15.00px;line-height:15.00px;">Simulation</div>
<div class="a" style="left:6px;top:419px;width:415px;height:204px;background:#fff;border:1px solid #828a93;border-bottom-color:#828a93"></div>
<div class="a" style="left:400px;top:420px;width:20px;height:202px;background:#efefef"></div>
<div class="a" style="left:407px;top:442px;width:6px;height:31px;background:#868686"></div>
<div class="a" style="left:186px;top:421px;width:1px;height:29px;background:#e2e2e2"></div>
<div class="t" style="left:12.50px;top:429.30px;font-size:15.00px;line-height:15.00px;transform:scaleX(0.9878);">Property</div>
<div class="t" style="left:192.00px;top:429.30px;font-size:15.00px;line-height:15.00px;transform:scaleX(0.9584);">Value</div>
<div class="a" style="left:7px;top:451px;width:391px;height:25px;background:#a0a0a0"></div>
<div class="a" style="left:7px;top:475px;width:391px;height:1px;background:#c8c8c8"></div>
<div class="t" style="left:11.50px;top:456.30px;font-size:15.00px;line-height:15.00px;color:#fff;font-weight:bold;transform:scaleX(0.8784);">Base</div>
<div class="a" style="left:32px;top:476px;width:366px;height:25px;background:#f3f3f3"></div>
<div class="a" style="left:32px;top:501px;width:366px;height:1px;background:#dcdcdc"></div>
<div class="a" style="left:186px;top:476px;width:2px;height:25px;background:#dcdcdc"></div>
<div class="t" style="left:36.00px;top:482.30px;font-size:15.00px;line-height:15.00px;transform:scaleX(0.9373);">Label</div>
<div class="t" style="left:191.00px;top:482.30px;font-size:15.00px;line-height:15.00px;transform:scaleX(0.9706);">Spectrum</div>
<div class="a" style="left:7px;top:503px;width:391px;height:25px;background:#a0a0a0"></div>
<div class="a" style="left:7px;top:527px;width:391px;height:1px;background:#c8c8c8"></div>
<div class="t" style="left:11.50px;top:508.30px;font-size:15.00px;line-height:15.00px;color:#fff;font-weight:bold;transform:scaleX(0.9386);">Basic Data</div>
<div class="a" style="left:32px;top:529px;width:366px;height:25px;background:#f3f3f3"></div>
<div class="a" style="left:32px;top:554px;width:366px;height:1px;background:#dcdcdc"></div>
<div class="a" style="left:186px;top:529px;width:2px;height:25px;background:#dcdcdc"></div>
<div class="t" style="left:36.00px;top:535.30px;font-size:15.00px;line-height:15.00px;transform:scaleX(0.9757);">Is Active</div>
<div class="t" style="left:191.00px;top:535.30px;font-size:15.00px;line-height:15.00px;transform:scaleX(0.9468);">false</div>
<div class="a" style="left:32px;top:580px;width:366px;height:1px;background:#dcdcdc"></div>
<div class="a" style="left:186px;top:555px;width:2px;height:25px;background:#dcdcdc"></div>
<div class="t" style="left:36.00px;top:561.30px;font-size:15.00px;line-height:15.00px;transform:scaleX(1.0318);">Author</div>
<div class="t" style="left:191.00px;top:561.30px;font-size:15.00px;line-height:15.00px;transform:scaleX(0.9021);">LabRPS Team</div>
<div class="a" style="left:32px;top:581px;width:366px;height:25px;background:#f3f3f3"></div>
<div class="a" style="left:32px;top:606px;width:366px;height:1px;background:#dcdcdc"></div>
<div class="a" style="left:186px;top:581px;width:2px;height:25px;background:#dcdcdc"></div>
<div class="t" style="left:36.00px;top:587.30px;font-size:15.00px;line-height:15.00px;transform:scaleX(0.9594);">Version</div>
<div class="t" style="left:191.00px;top:587.30px;font-size:15.00px;line-height:15.00px;transform:scaleX(0.9112);">1.0</div>
<div class="a" style="left:7px;top:607px;width:391px;height:15px;overflow:hidden">
<div class="t" style="left:29.00px;top:6.30px;font-size:15.00px;line-height:15.00px;transform:scaleX(0.9594);">Labrps Version</div>
<div class="t" style="left:184.00px;top:6.30px;font-size:15.00px;line-height:15.00px;transform:scaleX(0.9112);">0.1</div>
<div class="a" style="left:179px;top:0px;width:2px;height:15px;background:#dcdcdc"></div>
</div>
<div class="a" style="left:7px;top:626px;width:51px;height:22px;background:#f2f2f2;border:1px solid #e2e2e2;border-top:none"></div>
<div class="a" style="left:57px;top:626px;width:58px;height:24px;background:#fafafa;border:1px solid #e4e4e4;border-top:none"></div>
<div class="t" style="left:18.50px;top:631.00px;font-size:13.00px;line-height:13.00px;transform:scaleX(0.9448);">View</div>
<div class="t" style="left:75.00px;top:632.00px;font-size:13.00px;line-height:13.00px;transform:scaleX(0.9323);">Data</div>
<div class="a" style="left:3px;top:653px;width:426px;height:1px;background:#e4e4e4"></div>
<div class="a" style="left:430px;top:151px;width:1px;height:504px;background:#e6e6e6"></div>
<div class="a" style="left:436px;top:151px;width:1115px;height:474px;background:#fff;border-left:1px solid #6e7680;border-right:1px solid #6e7680;border-bottom:1px solid #6e7680"></div>
<div class="a" style="left:437px;top:362px;width:19px;height:262px;background:#f0f0f0"></div>
<div class="a" style="left:455px;top:153px;width:1px;height:209px;background:#e4e4e4"></div>
<div class="a" style="left:605px;top:153px;width:1px;height:29px;background:#e4e4e4"></div>
<div class="t" style="left:526.70px;top:160.20px;font-size:15.00px;line-height:15.00px;transform:scaleX(0.9829);">1</div>
<div class="a" style="left:755px;top:153px;width:1px;height:29px;background:#e4e4e4"></div>
<div class="t" style="left:676.70px;top:160.20px;font-size:15.00px;line-height:15.00px;transform:scaleX(0.9829);">2</div>
<div class="a" style="left:905px;top:153px;width:1px;height:29px;background:#e4e4e4"></div>
<div class="t" style="left:826.70px;top:160.20px;font-size:15.00px;line-height:15.00px;transform:scaleX(0.9829);">3</div>
<div class="a" style="left:1055px;top:153px;width:1px;height:29px;background:#e4e4e4"></div>
<div class="t" style="left:976.70px;top:160.20px;font-size:15.00px;line-height:15.00px;transform:scaleX(0.9829);">4</div>
<div class="a" style="left:1205px;top:153px;width:1px;height:29px;background:#e4e4e4"></div>
<div class="t" style="left:1126.70px;top:160.20px;font-size:15.00px;line-height:15.00px;transform:scaleX(0.9829);">5</div>
<div class="a" style="left:1355px;top:153px;width:1px;height:29px;background:#e4e4e4"></div>
<div class="t" style="left:1276.70px;top:160.20px;font-size:15.00px;line-height:15.00px;transform:scaleX(0.9829);">6</div>
<div class="a" style="left:456px;top:182px;width:899px;height:180px;background:#ffff80"></div>
<div class="a" style="left:456px;top:210px;width:899px;height:1px;background:#d4d4d4"></div>
<div class="a" style="left:456px;top:211px;width:899px;height:1px;background:#fdfdfd"></div>
<div class="t" style="left:442.30px;top:189.48px;font-size:15.50px;line-height:15.50px;transform:scaleX(0.8800);">1</div>
<div class="t" style="left:459.80px;top:189.38px;font-size:15.50px;line-height:15.50px;transform:scaleX(0.8850);">10.16</div>
<div class="t" style="left:609.80px;top:189.38px;font-size:15.50px;line-height:15.50px;transform:scaleX(0.8850);">0</div>
<div class="t" style="left:759.80px;top:189.38px;font-size:15.50px;line-height:15.50px;transform:scaleX(0.8850);">0</div>
<div class="t" style="left:909.80px;top:189.38px;font-size:15.50px;line-height:15.50px;transform:scaleX(0.8850);">0</div>
<div class="t" style="left:1059.80px;top:189.38px;font-size:15.50px;line-height:15.50px;transform:scaleX(0.8850);">0</div>
<div class="t" style="left:1209.80px;top:189.38px;font-size:15.50px;line-height:15.50px;transform:scaleX(0.8850);">0</div>
<div class="a" style="left:456px;top:240px;width:899px;height:1px;background:#d4d4d4"></div>
<div class="a" style="left:456px;top:241px;width:899px;height:1px;background:#fdfdfd"></div>
<div class="t" style="left:442.30px;top:219.48px;font-size:15.50px;line-height:15.50px;transform:scaleX(0.8800);">2</div>
<div class="t" style="left:459.80px;top:219.38px;font-size:15.50px;line-height:15.50px;transform:scaleX(0.8850);">9.736</div>
<div class="t" style="left:609.80px;top:219.38px;font-size:15.50px;line-height:15.50px;transform:scaleX(0.8850);">2.908</div>
<div class="t" style="left:759.80px;top:219.38px;font-size:15.50px;line-height:15.50px;transform:scaleX(0.8850);">0</div>
<div class="t" style="left:909.80px;top:219.38px;font-size:15.50px;line-height:15.50px;transform:scaleX(0.8850);">0</div>
<div class="t" style="left:1059.80px;top:219.38px;font-size:15.50px;line-height:15.50px;transform:scaleX(0.8850);">0</div>
<div class="t" style="left:1209.80px;top:219.38px;font-size:15.50px;line-height:15.50px;transform:scaleX(0.8850);">0</div>
<div class="a" style="left:456px;top:270px;width:899px;height:1px;background:#d4d4d4"></div>
<div class="a" style="left:456px;top:271px;width:899px;height:1px;background:#fdfdfd"></div>
<div class="t" style="left:442.30px;top:249.48px;font-size:15.50px;line-height:15.50px;transform:scaleX(0.8800);">3</div>
<div class="t" style="left:459.80px;top:249.38px;font-size:15.50px;line-height:15.50px;transform:scaleX(0.8850);">9.329</div>
<div class="t" style="left:609.80px;top:249.38px;font-size:15.50px;line-height:15.50px;transform:scaleX(0.8850);">2.786</div>
<div class="t" style="left:759.80px;top:249.38px;font-size:15.50px;line-height:15.50px;transform:scaleX(0.8850);">2.908</div>
<div class="t" style="left:909.80px;top:249.38px;font-size:15.50px;line-height:15.50px;transform:scaleX(0.8850);">0</div>
<div class="t" style="left:1059.80px;top:249.38px;font-size:15.50px;line-height:15.50px;transform:scaleX(0.8850);">0</div>
<div class="t" style="left:1209.80px;top:249.38px;font-size:15.50px;line-height:15.50px;transform:scaleX(0.8850);">0</div>
<div class="a" style="left:456px;top:300px;width:899px;height:1px;background:#d4d4d4"></div>
<div class="a" style="left:456px;top:301px;width:899px;height:1px;background:#fdfdfd"></div>
<div class="t" style="left:442.30px;top:279.48px;font-size:15.50px;line-height:15.50px;transform:scaleX(0.8800);">4</div>
<div class="t" style="left:459.80px;top:279.38px;font-size:15.50px;line-height:15.50px;transform:scaleX(0.8850);">8.939</div>
<div class="t" style="left:609.80px;top:279.38px;font-size:15.50px;line-height:15.50px;transform:scaleX(0.8850);">2.67</div>
<div class="t" style="left:759.80px;top:279.38px;font-size:15.50px;line-height:15.50px;transform:scaleX(0.8850);">2.786</div>
<div class="t" style="left:909.80px;top:279.38px;font-size:15.50px;line-height:15.50px;transform:scaleX(0.8850);">2.908</div>
<div class="t" style="left:1059.80px;top:279.38px;font-size:15.50px;line-height:15.50px;transform:scaleX(0.8850);">0</div>
<div class="t" style="left:1209.80px;top:279.38px;font-size:15.50px;line-height:15.50px;transform:scaleX(0.8850);">0</div>
<div class="a" style="left:456px;top:330px;width:899px;height:1px;background:#d4d4d4"></div>
<div class="a" style="left:456px;top:331px;width:899px;height:1px;background:#fdfdfd"></div>
<div class="t" style="left:442.30px;top:309.48px;font-size:15.50px;line-height:15.50px;transform:scaleX(0.8800);">5</div>
<div class="t" style="left:459.80px;top:309.38px;font-size:15.50px;line-height:15.50px;transform:scaleX(0.8850);">8.565</div>
<div class="t" style="left:609.80px;top:309.38px;font-size:15.50px;line-height:15.50px;transform:scaleX(0.8850);">2.558</div>
<div class="t" style="left:759.80px;top:309.38px;font-size:15.50px;line-height:15.50px;transform:scaleX(0.8850);">2.67</div>
<div class="t" style="left:909.80px;top:309.38px;font-size:15.50px;line-height:15.50px;transform:scaleX(0.8850);">2.786</div>
<div class="t" style="left:1059.80px;top:309.38px;font-size:15.50px;line-height:15.50px;transform:scaleX(0.8850);">2.908</div>
<div class="t" style="left:1209.80px;top:309.38px;font-size:15.50px;line-height:15.50px;transform:scaleX(0.8850);">0</div>
<div class="a" style="left:456px;top:360px;width:899px;height:1px;background:#d4d4d4"></div>
<div class="a" style="left:456px;top:361px;width:899px;height:1px;background:#fdfdfd"></div>
<div class="t" style="left:442.30px;top:339.48px;font-size:15.50px;line-height:15.50px;transform:scaleX(0.8800);">6</div>
<div class="t" style="left:459.80px;top:339.38px;font-size:15.50px;line-height:15.50px;transform:scaleX(0.8850);">8.207</div>
<div class="t" style="left:609.80px;top:339.38px;font-size:15.50px;line-height:15.50px;transform:scaleX(0.8850);">2.451</div>
<div class="t" style="left:759.80px;top:339.38px;font-size:15.50px;line-height:15.50px;transform:scaleX(0.8850);">2.558</div>
<div class="t" style="left:909.80px;top:339.38px;font-size:15.50px;line-height:15.50px;transform:scaleX(0.8850);">2.67</div>
<div class="t" style="left:1059.80px;top:339.38px;font-size:15.50px;line-height:15.50px;transform:scaleX(0.8850);">2.786</div>
<div class="t" style="left:1209.80px;top:339.38px;font-size:15.50px;line-height:15.50px;transform:scaleX(0.8850);">2.908</div>
<div class="a" style="left:604px;top:182px;width:1px;height:180px;background:#d4d4d4"></div>
<div class="a" style="left:605px;top:182px;width:1px;height:180px;background:#fdfdfd"></div>
<div class="a" style="left:754px;top:182px;width:1px;height:180px;background:#d4d4d4"></div>
<div class="a" style="left:755px;top:182px;width:1px;height:180px;background:#fdfdfd"></div>
<div class="a" style="left:904px;top:182px;width:1px;height:180px;background:#d4d4d4"></div>
<div class="a" style="left:905px;top:182px;width:1px;height:180px;background:#fdfdfd"></div>
<div class="a" style="left:1054px;top:182px;width:1px;height:180px;background:#d4d4d4"></div>
<div class="a" style="left:1055px;top:182px;width:1px;height:180px;background:#fdfdfd"></div>
<div class="a" style="left:1204px;top:182px;width:1px;height:180px;background:#d4d4d4"></div>
<div class="a" style="left:1205px;top:182px;width:1px;height:180px;background:#fdfdfd"></div>
<div class="a" style="left:1354px;top:182px;width:1px;height:180px;background:#d4d4d4"></div>
<div class="a" style="left:1355px;top:182px;width:1px;height:180px;background:#fdfdfd"></div>
<svg class="a" style="left:1525px;top:230px" width="18" height="20" viewBox="0 0 18 20"><path d="M16.6 3Q16.6 0.8 14.3 1.5Q5.5 4.5 2.3 8.5Q0.8 10.2 2.3 12Q5.5 15.8 14.3 18.8Q16.6 19.5 16.6 17.2Z" fill="#4c4c4c"/><path d="M12.8 5.5L6 9.8L12.8 14" fill="none" stroke="#f4f4f4" stroke-width="1.7"/></svg>
<div class="a" style="left:437px;top:625px;width:1114px;height:30px;background:#f0f0f0"></div>
<div class="a" style="left:437px;top:652px;width:954px;height:1px;background:#e2e2e2"></div>
<svg class="a" style="left:436px;top:628px" width="6" height="24" viewBox="0 0 6 24"><path d="M0.5 0.5L5 8L2 11.5L5 15L0.5 23.5" fill="none" stroke="#777" stroke-width="0.9"/></svg>
<div class="a" style="left:437px;top:625px;width:40px;height:28px;overflow:hidden">
<div class="t" style="left:-3.50px;top:8.00px;font-size:13.00px;line-height:13.00px;">P_Real</div>
</div>
<svg class="a" style="left:479px;top:631px" width="17" height="17" viewBox="0 0 17 17"><rect x="0.5" y="0.5" width="16" height="16" rx="2.5" fill="#b0b0b0" stroke="#a0a0a0" stroke-width="1"/><path d="M5 5L12 12M12 5L5 12" stroke="#f6f6f6" stroke-width="2"/></svg>
<div class="a" style="left:514px;top:627px;width:1px;height:26px;background:#e0e0e0"></div>
<svg class="a" style="left:530px;top:628px" width="19" height="20" viewBox="0 0 19 20"><path d="M9.5 0.5C5 0.5 5.2 2.5 5.2 2.5V5H9.7V5.8H3.2C3.2 5.8 0.5 5.5 0.5 10C0.5 14.5 2.8 14.3 2.8 14.3H4.3V12.2C4.3 12.2 4.2 9.8 6.7 9.8H11C11 9.8 13.3 9.9 13.3 7.6V2.9C13.3 2.9 13.6 0.5 9.5 0.5Z" fill="#3a72a8"/><path d="M9.5 19.5C14 19.5 13.8 17.5 13.8 17.5V15H9.3V14.2H15.8C15.8 14.2 18.5 14.5 18.5 10C18.5 5.5 16.2 5.7 16.2 5.7H14.7V7.8C14.7 7.8 14.8 10.2 12.3 10.2H8C8 10.2 5.7 10.1 5.7 12.4V17.1C5.7 17.1 5.4 19.5 9.5 19.5Z" fill="#f5cf3a"/><circle cx="7.3" cy="2.7" r="0.9" fill="#fff"/><circle cx="11.7" cy="17.3" r="0.9" fill="#fff"/></svg>
<div class="t" style="left:554.30px;top:633.00px;font-size:13.00px;line-height:13.00px;transform:scaleX(0.9310);">D:/RPS/Macros/RPSCholeskyDecomposition.py - Editor</div>
<svg class="a" style="left:861px;top:631px" width="17" height="17" viewBox="0 0 17 17"><rect x="0.5" y="0.5" width="16" height="16" rx="2.5" fill="#b0b0b0" stroke="#a0a0a0" stroke-width="1"/><path d="M5 5L12 12M12 5L5 12" stroke="#f6f6f6" stroke-width="2"/></svg>
<div class="a" style="left:895px;top:627px;width:1px;height:26px;background:#e0e0e0"></div>
<svg class="a" style="left:911px;top:628px" width="19" height="19" viewBox="0 0 19 19"><rect x="0" y="0" width="19" height="19" fill="#2e4a5f"/><rect x="0.5" y="0.5" width="18" height="18" fill="none" stroke="#486577" stroke-width="1"/><text x="9.5" y="13.5" text-anchor="middle" font-family="Liberation Sans" font-size="11" fill="#e8442a">(π)</text></svg>
<div class="t" style="left:935.40px;top:633.00px;font-size:13.00px;line-height:13.00px;transform:scaleX(0.9801);">Unnamed1 : 1*</div>
<svg class="a" style="left:1027px;top:631px" width="17" height="17" viewBox="0 0 17 17"><rect x="0.5" y="0.5" width="16" height="16" rx="2.5" fill="#b0b0b0" stroke="#a0a0a0" stroke-width="1"/><path d="M5 5L12 12M12 5L5 12" stroke="#f6f6f6" stroke-width="2"/></svg>
<div class="a" style="left:1061px;top:627px;width:1px;height:26px;background:#e0e0e0"></div>
<svg class="a" style="left:1077px;top:628px" width="19" height="19" viewBox="0 0 19 19"><rect x="0" y="0" width="19" height="19" fill="#2e4a5f"/><rect x="0.5" y="0.5" width="18" height="18" fill="none" stroke="#486577" stroke-width="1"/><text x="9.5" y="13.5" text-anchor="middle" font-family="Liberation Sans" font-size="11" fill="#e8442a">(π)</text></svg>
<div class="t" style="left:1101.30px;top:633.00px;font-size:13.00px;line-height:13.00px;transform:scaleX(0.9801);">Unnamed2 : 1*</div>
<svg class="a" style="left:1192px;top:631px" width="17" height="17" viewBox="0 0 17 17"><rect x="0.5" y="0.5" width="16" height="16" rx="2.5" fill="#b0b0b0" stroke="#a0a0a0" stroke-width="1"/><path d="M5 5L12 12M12 5L5 12" stroke="#f6f6f6" stroke-width="2"/></svg>
<div class="a" style="left:1228px;top:627px;width:1px;height:26px;background:#e0e0e0"></div>
<svg class="a" style="left:1243px;top:628px" width="19" height="19" viewBox="0 0 19 19"><rect x="0" y="0" width="19" height="19" fill="#2e4a5f"/><rect x="0.5" y="0.5" width="18" height="18" fill="none" stroke="#486577" stroke-width="1"/><text x="9.5" y="13.5" text-anchor="middle" font-family="Liberation Sans" font-size="11" fill="#e8442a">(π)</text></svg>
<div class="t" style="left:1267.80px;top:633.00px;font-size:13.00px;line-height:13.00px;transform:scaleX(0.9801);">Unnamed3 : 1*</div>
<svg class="a" style="left:1359px;top:631px" width="17" height="17" viewBox="0 0 17 17"><rect x="0.5" y="0.5" width="16" height="16" rx="2.5" fill="#b0b0b0" stroke="#a0a0a0" stroke-width="1"/><path d="M5 5L12 12M12 5L5 12" stroke="#f6f6f6" stroke-width="2"/></svg>
<div class="a" style="left:1390px;top:627px;width:1px;height:26px;background:#e0e0e0"></div>
<div class="a" style="left:1391px;top:626px;width:121px;height:29px;background:#f9f9f9;border:1px solid #e6e6e6;border-bottom:none"></div>
<svg class="a" style="left:1412px;top:632px" width="15" height="15" viewBox="0 0 15 15"><rect x="0" y="0" width="15" height="15" fill="#ffff80" stroke="#666" stroke-width="0.8"/><path d="M3.75 0V15" stroke="#777" stroke-width="0.7"/><path d="M0 3.75H15" stroke="#777" stroke-width="0.7"/><path d="M7.50 0V15" stroke="#777" stroke-width="0.7"/><path d="M0 7.50H15" stroke="#777" stroke-width="0.7"/><path d="M11.25 0V15" stroke="#777" stroke-width="0.7"/><path d="M0 11.25H15" stroke="#777" stroke-width="0.7"/><rect x="0.3" y="0.3" width="5.55" height="5.55" fill="#e0404a"/></svg>
<div class="t" style="left:1434.00px;top:633.50px;font-size:13.00px;line-height:13.00px;transform:scaleX(0.9479);">table 1</div>
<svg class="a" style="left:1477px;top:631px" width="18" height="17" viewBox="0 0 18 17"><rect x="0.5" y="0.5" width="17" height="16" rx="2.5" fill="#e46a4a" stroke="#d8402a" stroke-width="1"/><path d="M5 4.5L13 12.5M13 4.5L5 12.5" stroke="#fff" stroke-width="2.6"/></svg>
<svg class="a" style="left:1513px;top:628px" width="18" height="27" viewBox="0 0 18 27"><rect x="0.5" y="0.5" width="17" height="26" rx="3" fill="#fdfdfd" stroke="#c8c8c8" stroke-width="1"/><path d="M11 8V18L5.5 13Z" fill="#111"/></svg>
<svg class="a" style="left:1532px;top:628px" width="18" height="27" viewBox="0 0 18 27"><rect x="0.5" y="0.5" width="17" height="26" rx="3" fill="#f6f6f6" stroke="#ececec" stroke-width="1"/><path d="M7 8V18L12.5 13Z" fill="#9a9a9a"/></svg>
<div class="a" style="left:1556px;top:151px;width:333px;height:24px;background:#dadada;border:1px solid #bababa"></div>
<div class="t" style="left:1562.50px;top:157.30px;font-size:15.00px;line-height:15.00px;transform:scaleX(1.0160);">Plot property</div>
<svg class="a" style="left:1843px;top:158px" width="11" height="12" viewBox="0 0 11 12"><rect x="3" y="0.8" width="7.2" height="6.5" fill="none" stroke="#3c3c3c" stroke-width="1.5"/><rect x="3" y="0.8" width="7.2" height="1.8" fill="#3c3c3c"/><rect x="0.8" y="4.5" width="7.2" height="6.8" fill="#dadada" stroke="#3c3c3c" stroke-width="1.5"/><rect x="0.8" y="4.5" width="7.2" height="2" fill="#3c3c3c"/></svg>
<svg class="a" style="left:1870px;top:159px" width="11" height="11" viewBox="0 0 11 11"><path d="M1 1L10 10M10 1L1 10" stroke="#3a3a3a" stroke-width="2"/></svg>
<div class="a" style="left:1567px;top:189px;width:312px;height:225px;background:#fff"></div>
<svg class="a" style="left:1575px;top:197px" width="14" height="14" viewBox="0 0 14 14"><rect x="0" y="0" width="14" height="14" fill="#ffff80" stroke="#666" stroke-width="0.8"/><path d="M3.50 0V14" stroke="#777" stroke-width="0.7"/><path d="M0 3.50H14" stroke="#777" stroke-width="0.7"/><path d="M7.00 0V14" stroke="#777" stroke-width="0.7"/><path d="M0 7.00H14" stroke="#777" stroke-width="0.7"/><path d="M10.50 0V14" stroke="#777" stroke-width="0.7"/><path d="M0 10.50H14" stroke="#777" stroke-width="0.7"/><rect x="0.3" y="0.3" width="5.18" height="5.18" fill="#e0404a"/></svg>
<div class="t" style="left:1597.40px;top:197.10px;font-size:15.00px;line-height:15.00px;transform:scaleX(0.9681);">table 1</div>
<div class="a" style="left:1592px;top:219px;width:287px;height:25px;background:#d9d9d9;border-radius:3px 0 0 3px"></div>
<svg class="a" style="left:1599px;top:225px" width="15" height="15" viewBox="0 0 15 15"><rect x="0.5" y="0.5" width="14" height="14" fill="#e8eef4" stroke="#4a6a8a" stroke-width="1"/><path d="M0.5 4H14.5M0.5 7.5H14.5M0.5 11H14.5M4.5 0.5V14.5M10.5 0.5V14.5" stroke="#4a6a8a" stroke-width="0.8"/><path d="M5.5 5.5L7.5 7.5L5.5 9.5M9.5 5.5L7.5 7.5L9.5 9.5" fill="none" stroke="#4a6a8a" stroke-width="0.9"/></svg>
<div class="t" style="left:1624.00px;top:225.30px;font-size:15.00px;line-height:15.00px;transform:scaleX(1.0066);">Window</div>
<svg class="a" style="left:1599px;top:249px" width="15" height="15" viewBox="0 0 15 15"><path d="M0.5 0.8H7.5V3.5H0.5ZM0.5 11.5H7.5V14.2H0.5ZM7.5 3.5V11.5M7.5 6.5H14.3V9H7.5" fill="#fff" stroke="#555" stroke-width="1"/></svg>
<div class="t" style="left:1624.00px;top:250.30px;font-size:15.00px;line-height:15.00px;transform:scaleX(0.9238);">Rows x Cols</div>
<div class="a" style="left:1567px;top:421px;width:311px;height:223px;background:#fff;border:1px solid #828a93;border-top-color:#e4e4e4"></div>
<div class="a" style="left:1723px;top:423px;width:1px;height:28px;background:#e2e2e2"></div>
<div class="t" style="left:1574.00px;top:430.30px;font-size:15.00px;line-height:15.00px;transform:scaleX(0.9878);">Property</div>
<div class="t" style="left:1728.70px;top:430.30px;font-size:15.00px;line-height:15.00px;transform:scaleX(0.9396);">Value</div>
<div class="a" style="left:1568px;top:475px;width:309px;height:1px;background:#dcdcdc"></div>
<div class="a" style="left:1723px;top:451px;width:1px;height:24px;background:#dedede"></div>
<div class="t" style="left:1597.50px;top:457.30px;font-size:15.00px;line-height:15.00px;transform:scaleX(0.9747);">Name</div>
<div class="t" style="left:1727.50px;top:457.30px;font-size:15.00px;line-height:15.00px;transform:scaleX(0.9595);">Graph</div>
<div class="a" style="left:1594px;top:476px;width:283px;height:25px;background:#f3f3f3"></div>
<div class="a" style="left:1568px;top:500px;width:309px;height:1px;background:#dcdcdc"></div>
<div class="a" style="left:1723px;top:476px;width:1px;height:24px;background:#dedede"></div>
<div class="t" style="left:1597.50px;top:482.30px;font-size:15.00px;line-height:15.00px;transform:scaleX(0.9264);">Label</div>
<div class="a" style="left:1568px;top:525px;width:309px;height:1px;background:#dcdcdc"></div>
<div class="a" style="left:1723px;top:501px;width:1px;height:24px;background:#dedede"></div>
<div class="t" style="left:1597.50px;top:507.30px;font-size:15.00px;line-height:15.00px;transform:scaleX(0.9810);">Geometry</div>
<div class="t" style="left:1727.50px;top:507.30px;font-size:15.00px;line-height:15.00px;transform:scaleX(0.9484);">[(0, 0), 892 x 380]</div>
<div class="a" style="left:1619px;top:526px;width:258px;height:25px;background:#f3f3f3"></div>
<div class="a" style="left:1568px;top:550px;width:309px;height:1px;background:#dcdcdc"></div>
<div class="a" style="left:1723px;top:526px;width:1px;height:24px;background:#dedede"></div>
<div class="t" style="left:1622.50px;top:532.30px;font-size:15.00px;line-height:15.00px;transform:scaleX(0.8996);">X</div>
<div class="t" style="left:1727.50px;top:532.30px;font-size:15.00px;line-height:15.00px;transform:scaleX(0.9590);">0</div>
<div class="a" style="left:1568px;top:575px;width:309px;height:1px;background:#dcdcdc"></div>
<div class="a" style="left:1723px;top:551px;width:1px;height:24px;background:#dedede"></div>
<div class="t" style="left:1622.50px;top:557.30px;font-size:15.00px;line-height:15.00px;transform:scaleX(0.8996);">Y</div>
<div class="t" style="left:1727.50px;top:557.30px;font-size:15.00px;line-height:15.00px;transform:scaleX(0.9590);">0</div>
<div class="a" style="left:1619px;top:576px;width:258px;height:25px;background:#f3f3f3"></div>
<div class="a" style="left:1568px;top:600px;width:309px;height:1px;background:#dcdcdc"></div>
<div class="a" style="left:1723px;top:576px;width:1px;height:24px;background:#dedede"></div>
<div class="t" style="left:1622.00px;top:582.30px;font-size:15.00px;line-height:15.00px;transform:scaleX(1.0432);">Width</div>
<div class="t" style="left:1727.50px;top:582.30px;font-size:15.00px;line-height:15.00px;transform:scaleX(0.9590);">892</div>
<div class="a" style="left:1568px;top:625px;width:309px;height:1px;background:#dcdcdc"></div>
<div class="a" style="left:1723px;top:601px;width:1px;height:24px;background:#dedede"></div>
<div class="t" style="left:1622.50px;top:607.30px;font-size:15.00px;line-height:15.00px;transform:scaleX(1.0148);">Height</div>
<div class="t" style="left:1727.50px;top:607.30px;font-size:15.00px;line-height:15.00px;transform:scaleX(0.9590);">380</div>
<svg class="a" style="left:1576px;top:511px" width="11" height="7" viewBox="0 0 11 7"><path d="M1 1L5.5 5.5L10 1" fill="none" stroke="#333" stroke-width="1.5"/></svg>
<div class="a" style="left:1px;top:661px;width:1888px;height:24px;background:#dadada;border:1px solid #bababa"></div>
<div class="t" style="left:7.50px;top:667.30px;font-size:15.00px;line-height:15.00px;">Plot explorer</div>
<svg class="a" style="left:1843px;top:668px" width="11" height="12" viewBox="0 0 11 12"><rect x="3" y="0.8" width="7.2" height="6.5" fill="none" stroke="#3c3c3c" stroke-width="1.5"/><rect x="3" y="0.8" width="7.2" height="1.8" fill="#3c3c3c"/><rect x="0.8" y="4.5" width="7.2" height="6.8" fill="#dadada" stroke="#3c3c3c" stroke-width="1.5"/><rect x="0.8" y="4.5" width="7.2" height="2" fill="#3c3c3c"/></svg>
<svg class="a" style="left:1870px;top:669px" width="11" height="11" viewBox="0 0 11 11"><path d="M1 1L10 10M10 1L1 10" stroke="#3a3a3a" stroke-width="2"/></svg>
<div class="a" style="left:1px;top:687px;width:935px;height:252px;background:#fff"></div>
<div class="a" style="left:942px;top:687px;width:947px;height:252px;background:#fff"></div>
<div class="a" style="left:1px;top:939px;width:1889px;height:1px;background:#8c8c8c"></div>
<svg class="a" style="left:32px;top:690px" width="16" height="17" viewBox="0 0 16 17"><defs><linearGradient id="ut" x1="0" y1="0" x2="1" y2="1"><stop offset="0" stop-color="#efe2c4"/><stop offset="1" stop-color="#c9ad78"/></linearGradient></defs><path d="M3 0.5H15.5V16.5H0.5V3Z" fill="url(#ut)" stroke="#c8b080" stroke-width="0.6"/><text x="8" y="12.5" text-anchor="middle" font-family="Liberation Serif" font-style="italic" font-size="12" fill="#e8503a">α</text></svg>
<div class="t" style="left:57.50px;top:690.80px;font-size:15.00px;line-height:15.00px;transform:scaleX(1.0224);">Untitled</div>
<div class="a" style="left:1274px;top:688px;width:1px;height:30px;background:#e4e4e4"></div>
<div class="a" style="left:1399px;top:688px;width:1px;height:30px;background:#e4e4e4"></div>
<div class="a" style="left:1524px;top:688px;width:1px;height:30px;background:#e4e4e4"></div>
<div class="a" style="left:1649px;top:688px;width:1px;height:30px;background:#e4e4e4"></div>
<div class="t" style="left:947.80px;top:696.00px;font-size:15.00px;line-height:15.00px;transform:scaleX(0.9747);">Name</div>
<div class="t" style="left:1280.00px;top:696.00px;font-size:15.00px;line-height:15.00px;transform:scaleX(0.9225);">Type</div>
<div class="t" style="left:1404.60px;top:696.00px;font-size:15.00px;line-height:15.00px;transform:scaleX(0.9925);">View</div>
<div class="t" style="left:1529.60px;top:696.00px;font-size:15.00px;line-height:15.00px;transform:scaleX(0.9557);">Created</div>
<div class="t" style="left:1655.00px;top:696.00px;font-size:15.00px;line-height:15.00px;transform:scaleX(0.9264);">Label</div>
<svg class="a" style="left:948px;top:721px" width="16" height="15" viewBox="0 0 16 15"><rect x="0.6" y="0.6" width="14.8" height="13.8" fill="#fff" stroke="#606060" stroke-width="1.2"/><path d="M0.6 5H15.4M0.6 9.7H15.4M5.5 0.6V14.4M10.5 0.6V14.4" stroke="#606060" stroke-width="1.2"/><rect x="1.2" y="1.2" width="4" height="3.4" fill="#2196f3"/></svg>
<svg class="a" style="left:948px;top:741px" width="16" height="15" viewBox="0 0 16 15"><path d="M1 0.5V14.5H15.5" fill="none" stroke="#888" stroke-width="1.2"/><path d="M1.5 10L5 5.5L8 8.5L12 3L15 4V14H1.5Z" fill="#b8b8b8"/><path d="M1.5 10L5 5.5L8 8.5L12 3L15 4" fill="none" stroke="#707070" stroke-width="1"/></svg>
<svg class="a" style="left:948px;top:761px" width="15" height="14" viewBox="0 0 15 14"><rect x="0" y="0" width="15" height="14" fill="#ffff80" stroke="#666" stroke-width="0.8"/><path d="M3.75 0V14" stroke="#777" stroke-width="0.7"/><path d="M0 3.50H15" stroke="#777" stroke-width="0.7"/><path d="M7.50 0V14" stroke="#777" stroke-width="0.7"/><path d="M0 7.00H15" stroke="#777" stroke-width="0.7"/><path d="M11.25 0V14" stroke="#777" stroke-width="0.7"/><path d="M0 10.50H15" stroke="#777" stroke-width="0.7"/><rect x="0.3" y="0.3" width="5.55" height="5.18" fill="#e0404a"/></svg>
<svg class="a" style="left:948px;top:781px" width="15" height="14" viewBox="0 0 15 14"><rect x="0" y="0" width="15" height="14" fill="#ffff80" stroke="#666" stroke-width="0.8"/><path d="M3.75 0V14" stroke="#777" stroke-width="0.7"/><path d="M0 3.50H15" stroke="#777" stroke-width="0.7"/><path d="M7.50 0V14" stroke="#777" stroke-width="0.7"/><path d="M0 7.00H15" stroke="#777" stroke-width="0.7"/><path d="M11.25 0V14" stroke="#777" stroke-width="0.7"/><path d="M0 10.50H15" stroke="#777" stroke-width="0.7"/><rect x="0.3" y="0.3" width="5.55" height="5.18" fill="#e0404a"/></svg>
<div class="t" style="left:973.80px;top:720.90px;font-size:15.00px;line-height:15.00px;">table</div>
<div class="t" style="left:1280.00px;top:720.90px;font-size:15.00px;line-height:15.00px;transform:scaleX(0.8924);">Table</div>
<div class="t" style="left:1404.00px;top:720.90px;font-size:15.00px;line-height:15.00px;transform:scaleX(0.9930);">Normal</div>
<div class="t" style="left:1529.00px;top:720.90px;font-size:15.00px;line-height:15.00px;transform:scaleX(0.9770);">23/01/2025 1:0...</div>
<div class="t" style="left:973.80px;top:740.90px;font-size:15.00px;line-height:15.00px;transform:scaleX(0.9499);">Graph</div>
<div class="t" style="left:1280.00px;top:740.90px;font-size:15.00px;line-height:15.00px;transform:scaleX(0.9380);">2D Graph</div>
<div class="t" style="left:1404.00px;top:740.90px;font-size:15.00px;line-height:15.00px;transform:scaleX(0.9930);">Normal</div>
<div class="t" style="left:1529.00px;top:740.90px;font-size:15.00px;line-height:15.00px;transform:scaleX(0.9770);">23/01/2025 8:5...</div>
<div class="t" style="left:973.80px;top:760.90px;font-size:15.00px;line-height:15.00px;transform:scaleX(0.9553);">ComputeXCrossSpectrumMatrixPP_Real</div>
<div class="t" style="left:1280.00px;top:760.90px;font-size:15.00px;line-height:15.00px;transform:scaleX(0.9796);">Matrix</div>
<div class="t" style="left:1404.00px;top:760.90px;font-size:15.00px;line-height:15.00px;transform:scaleX(0.9930);">Normal</div>
<div class="t" style="left:1529.00px;top:760.90px;font-size:15.00px;line-height:15.00px;transform:scaleX(0.9770);">23/01/2025 10:...</div>
<div class="t" style="left:973.80px;top:780.90px;font-size:15.00px;line-height:15.00px;transform:scaleX(0.9770);">table 1</div>
<div class="t" style="left:1280.00px;top:780.90px;font-size:15.00px;line-height:15.00px;transform:scaleX(0.9796);">Matrix</div>
<div class="t" style="left:1404.00px;top:780.90px;font-size:15.00px;line-height:15.00px;transform:scaleX(0.9765);">Maximized</div>
<div class="t" style="left:1529.00px;top:780.90px;font-size:15.00px;line-height:15.00px;transform:scaleX(0.9867);">23/01/2025 11:...</div>
<div class="a" style="left:4px;top:940px;width:89px;height:21px;background:#f2f2f2;border:1px solid #e4e4e4;border-top:none"></div>
<div class="a" style="left:92px;top:939px;width:105px;height:24px;background:#fafafa;border:1px solid #e6e6e6;border-top:none"></div>
<div class="a" style="left:196px;top:940px;width:96px;height:21px;background:#f2f2f2;border:1px solid #e4e4e4;border-top:none"></div>
<div class="a" style="left:291px;top:940px;width:112px;height:21px;background:#f2f2f2;border:1px solid #e4e4e4;border-top:none;border-left:none"></div>
<div class="a" style="left:92px;top:939px;width:105px;height:1px;background:#fafafa"></div>
<div class="t" style="left:16.80px;top:943.80px;font-size:13.00px;line-height:13.00px;transform:scaleX(0.9403);">Result view</div>
<div class="t" style="left:110.00px;top:946.00px;font-size:13.00px;line-height:13.00px;transform:scaleX(0.9592);">Plot explorer</div>
<div class="t" style="left:210.40px;top:943.40px;font-size:13.00px;line-height:13.00px;transform:scaleX(0.9543);">Report view</div>
<div class="t" style="left:306.40px;top:943.40px;font-size:13.00px;line-height:13.00px;transform:scaleX(0.9337);">Python console</div>
<div class="a" style="left:1866px;top:967px;width:1px;height:25px;background:#d0d0d0"></div>
<svg class="a" style="left:1876px;top:983px" width="12" height="12" viewBox="0 0 12 12"><rect x="9" y="0" width="2" height="2" fill="#a8a8a8"/><rect x="6" y="3" width="2" height="2" fill="#a8a8a8"/><rect x="9" y="3" width="2" height="2" fill="#a8a8a8"/><rect x="3" y="6" width="2" height="2" fill="#a8a8a8"/><rect x="6" y="6" width="2" height="2" fill="#a8a8a8"/><rect x="9" y="6" width="2" height="2" fill="#a8a8a8"/><rect x="0" y="9" width="2" height="2" fill="#a8a8a8"/><rect x="3" y="9" width="2" height="2" fill="#a8a8a8"/><rect x="6" y="9" width="2" height="2" fill="#a8a8a8"/><rect x="9" y="9" width="2" height="2" fill="#a8a8a8"/></svg>
</body></html>
